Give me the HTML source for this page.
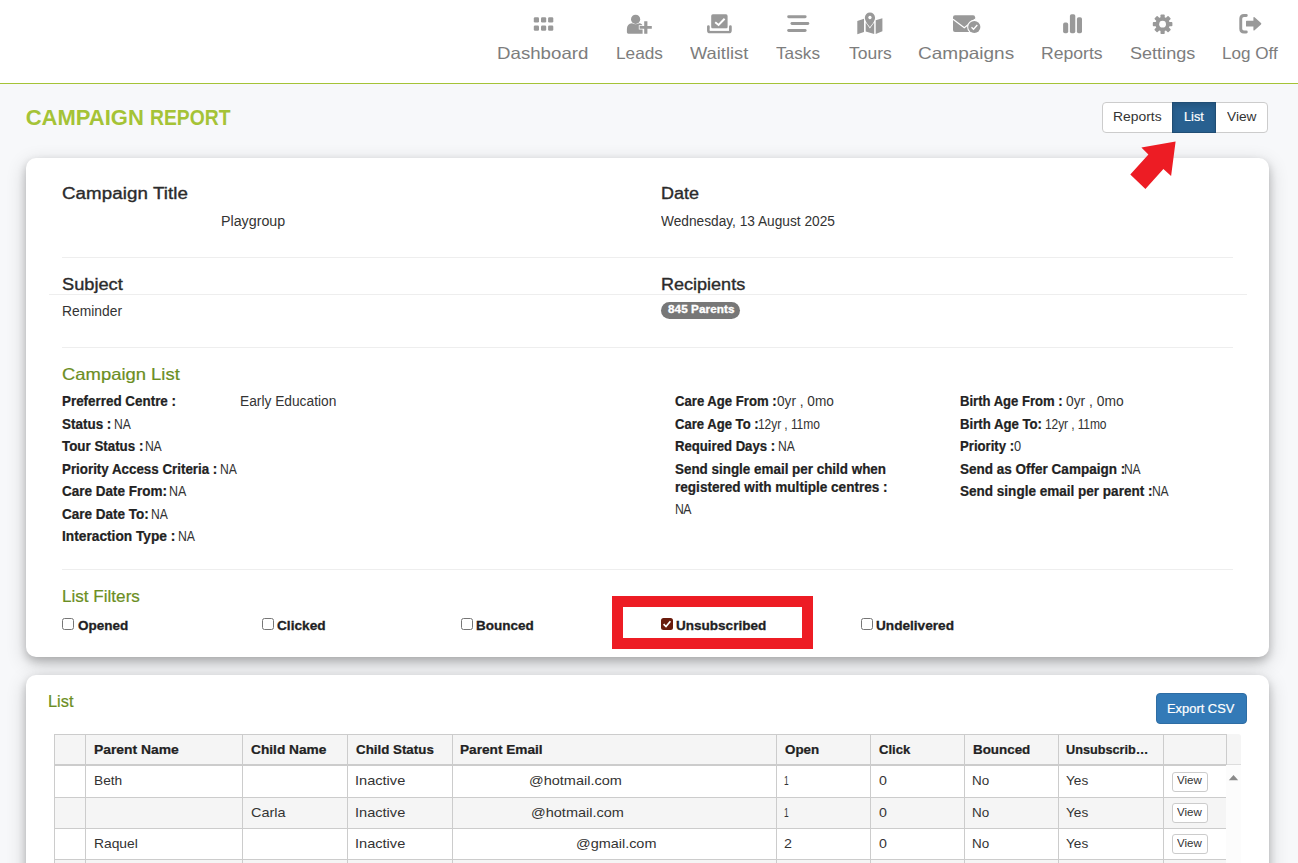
<!DOCTYPE html>
<html><head><meta charset="utf-8"><title>Campaign Report</title>
<style>
*{box-sizing:border-box}
html,body{margin:0;padding:0}
body{width:1298px;height:863px;overflow:hidden;background:#f7f8fa;font-family:"Liberation Sans",sans-serif;position:relative}
.t{position:absolute;white-space:pre;line-height:1;transform-origin:0 50%;font-family:"Liberation Sans",sans-serif}
.a{position:absolute}
#hdr{left:0;top:0;width:1298px;height:84px;background:#fff;border-bottom:1px solid #a5c336}
.card{background:#fff;border-radius:10px;box-shadow:0 4px 8px 0 rgba(0,0,0,.2),0 6px 20px 0 rgba(0,0,0,.19)}
.hr{height:1px;background:#eee}
.cb{width:11.5px;height:11.5px;border:1px solid #767676;border-radius:2.5px;background:#fff}
.vb{border:1px solid #ccc;border-radius:3px;background:#fff}
.vl{width:1px;background:#ccc}
.hl{height:1px;background:#ccc}
</style></head><body>
<div id="hdr" class="a"></div>
<svg class="a" style="left:0;top:0" width="1298" height="83" viewBox="0 0 1298 83">
<g fill="#999">
<!-- dashboard grid -->
<rect x="533.8" y="17.2" width="5.2" height="5.2" rx="1.2"/><rect x="541" y="17.2" width="5.2" height="5.2" rx="1.2"/><rect x="548.1" y="17.2" width="5.2" height="5.2" rx="1.2"/>
<rect x="533.8" y="25.5" width="5.2" height="5.2" rx="1.2"/><rect x="541" y="25.5" width="5.2" height="5.2" rx="1.2"/><rect x="548.1" y="25.5" width="5.2" height="5.2" rx="1.2"/>
<!-- leads user-plus -->
<circle cx="635.6" cy="19.3" r="4.6"/>
<path d="M626.9 32.3 L626.9 29 Q626.9 23.6 632 23.2 Q635.6 25.4 639.2 23.2 Q642.6 23.6 642.6 26 L642.6 33.7 L628.3 33.7 Q626.9 33.7 626.9 32.3 Z"/>
<path d="M644.2 21.2 h3.2 v4.9 h4.4 v2.7 h-4.4 v4.9 h-3.2 v-4.9 h-4.6 v-2.7 h4.6 z" stroke="#fff" stroke-width="1.6" paint-order="stroke"/>
<!-- waitlist -->
<rect x="711.2" y="14.3" width="16.4" height="14.2" rx="1.6"/>
<path d="M708.4 26.5 V30.4 Q708.4 32 710 32 H728.8 Q730.4 32 730.4 30.4 V26.5" fill="none" stroke="#999" stroke-width="2.7" stroke-linecap="round"/>
<rect x="709.8" y="28.6" width="19.2" height="2.05" fill="#fff"/>
<path d="M715.2 22.2 L718.6 25 L724.6 18.8" fill="none" stroke="#fff" stroke-width="2"/>
<!-- tasks -->
<rect x="787.2" y="15.3" width="19.4" height="2.9" rx="1.45"/><rect x="790.5" y="22" width="18.8" height="2.9" rx="1.45"/><rect x="787.2" y="29" width="19.4" height="2.9" rx="1.45"/>
<!-- tours map -->
<path d="M857.3 21 L864 18.8 L864 32 L857.3 34.2 Z"/>
<path d="M865.7 22.5 L869.9 28.6 L874.2 22.5 L874.2 34.1 L865.7 31.6 Z"/>
<path d="M875.7 20.2 L882.4 18.2 L882.4 31.3 L875.7 34.1 Z"/>
<path d="M869.95 12.6 A5.1 5.1 0 0 1 875.05 17.7 C875.05 21 871.5 25 869.95 27.2 C868.4 25 864.85 21 864.85 17.7 A5.1 5.1 0 0 1 869.95 12.6 Z M869.95 15.8 A1.7 1.7 0 1 0 869.96 15.8 Z" fill-rule="evenodd"/>
<!-- campaigns envelope -->
<rect x="953" y="15.3" width="22.1" height="16.6" rx="2"/>
<path d="M953 19.3 L964.3 27.8 L975.1 19.3" fill="none" stroke="#fff" stroke-width="1.2"/>
<circle cx="974.3" cy="27" r="7.2" fill="#fff"/>
<circle cx="974.3" cy="27" r="6.1"/>
<path d="M971.5 27.2 L973.5 29.2 L977.3 25" fill="none" stroke="#fff" stroke-width="1.3"/>
<!-- reports bars -->
<rect x="1063.1" y="22.6" width="5.1" height="10.7" rx="1.8"/><rect x="1069.9" y="14.3" width="5.4" height="19" rx="1.8"/><rect x="1076.9" y="17.2" width="5.1" height="16.1" rx="1.8"/>
<!-- settings gear -->
<g transform="translate(1162.6 24.2)">
<circle r="7.1"/>
<g id="tooth"><rect x="-2.1" y="-9.8" width="4.2" height="19.6" rx="0.8"/></g>
<rect x="-2.1" y="-9.8" width="4.2" height="19.6" rx="0.8" transform="rotate(45)"/>
<rect x="-2.1" y="-9.8" width="4.2" height="19.6" rx="0.8" transform="rotate(90)"/>
<rect x="-2.1" y="-9.8" width="4.2" height="19.6" rx="0.8" transform="rotate(135)"/>
<circle r="3.4" fill="#fff"/>
</g>
<!-- log off -->
<path d="M1246.3 15.45 H1244 Q1240.75 15.45 1240.75 18.7 V28.8 Q1240.75 32.05 1244 32.05 H1246.3" fill="none" stroke="#999" stroke-width="2.9" stroke-linecap="round"/>
<path d="M1246.6 20.8 H1253.4 V17.6 Q1253.6 16.6 1254.6 17.3 L1261 23 Q1261.7 23.7 1261 24.4 L1254.6 30.2 Q1253.6 30.9 1253.4 29.9 V26.6 H1246.6 Q1246 26.6 1246 26 V21.4 Q1246 20.8 1246.6 20.8 Z"/>
</g>
</svg>

<!-- button group -->
<div class="a" style="left:1102px;top:102px;width:166px;height:31px;border:1px solid #ccc;border-radius:4px;background:#fff"></div>
<div class="a" style="left:1172px;top:102px;width:44px;height:31px;background:#286090;border:1px solid #204d74;box-shadow:inset 0 3px 5px rgba(0,0,0,.125)"></div>
<!-- card 1 -->
<div class="a card" style="left:26px;top:158px;width:1243px;height:499px"></div>
<div class="a hr" style="left:62px;top:257px;width:1171px"></div>
<div class="a hr" style="left:49px;top:294px;width:1198px"></div>
<div class="a hr" style="left:62px;top:347px;width:1171px"></div>
<div class="a hr" style="left:62px;top:569px;width:1171px"></div>
<div class="a" style="left:661px;top:302px;width:79px;height:17px;border-radius:8.5px;background:#777"></div>
<!-- checkboxes -->
<div class="a cb" style="left:62px;top:618px"></div>
<div class="a cb" style="left:262px;top:618px"></div>
<div class="a cb" style="left:461px;top:618px"></div>
<div class="a cb" style="left:861px;top:618px"></div>
<div class="a" style="left:661px;top:618px;width:11.5px;height:11.5px;border-radius:2.5px;background:#6a1b0c"></div>
<svg class="a" style="left:661px;top:618px" width="12" height="12" viewBox="0 0 12 12"><path d="M2.6 6.2 L5 8.6 L9.4 3.2" fill="none" stroke="#fff" stroke-width="1.7"/></svg>
<div class="a" style="left:612px;top:596px;width:201px;height:53px;border:11px solid #ed1c24"></div>
<!-- arrow -->
<svg class="a" style="left:1120px;top:135px" width="70" height="60" viewBox="1120 135 70 60"><polygon points="1175.6,141.4 1141.4,147.4 1148.4,154.6 1130.3,174.5 1145.4,188.9 1163.4,169.1 1171.1,176" fill="#ed1c24"/></svg>
<!-- card 2 -->
<div class="a card" style="left:26px;top:675px;width:1243px;height:260px"></div>
<div class="a" style="left:1156px;top:693px;width:91px;height:31px;background:#337ab7;border:1px solid #2e6da4;border-radius:4px"></div>
<!-- table -->
<div class="a" style="left:54px;top:734px;width:1187px;height:31px;background:#f5f5f5;border-top-right-radius:3px"></div>
<div class="a" style="left:1226px;top:764px;width:15px;height:1px;background:#ddd"></div>
<div class="a" style="left:54px;top:798px;width:1172px;height:30px;background:#f5f5f5"></div>
<div class="a" style="left:54px;top:860px;width:1172px;height:3px;background:#f5f5f5"></div>
<div class="a" style="left:1226px;top:765px;width:15px;height:98px;background:#fcfcfc"></div>
<div class="a hl" style="left:54px;top:734px;width:1172px"></div>
<div class="a" style="left:54px;top:764px;width:1172px;height:2px;background:#ccc"></div>
<div class="a hl" style="left:54px;top:797px;width:1172px"></div>
<div class="a hl" style="left:54px;top:828px;width:1172px"></div>
<div class="a hl" style="left:54px;top:859px;width:1172px"></div>
<div class="a vl" style="left:54px;top:734px;height:129px"></div>
<div class="a vl" style="left:85px;top:734px;height:129px"></div>
<div class="a vl" style="left:242px;top:734px;height:129px"></div>
<div class="a vl" style="left:347px;top:734px;height:129px"></div>
<div class="a vl" style="left:452px;top:734px;height:129px"></div>
<div class="a vl" style="left:776px;top:734px;height:129px"></div>
<div class="a vl" style="left:870px;top:734px;height:129px"></div>
<div class="a vl" style="left:964px;top:734px;height:129px"></div>
<div class="a vl" style="left:1058px;top:734px;height:129px"></div>
<div class="a vl" style="left:1163px;top:734px;height:129px"></div>
<div class="a vl" style="left:1226px;top:734px;height:31px"></div>
<div class="a vb" style="left:1172px;top:772px;width:36px;height:20px"></div>
<div class="a vb" style="left:1172px;top:803px;width:36px;height:20px"></div>
<div class="a vb" style="left:1172px;top:834px;width:36px;height:20px"></div>
<svg class="a" style="left:1228px;top:774px" width="12" height="8" viewBox="1228 774 12 8"><polygon points="1233.5,774.9 1238.2,780.2 1228.8,780.2" fill="#8a8a8a"/></svg>
<span class="t" style="left:496.96px;top:45.00px;font-size:16.5px;font-weight:400;color:#7d7d7d;transform:scaleX(1.1322);">Dashboard</span>
<span class="t" style="left:615.60px;top:45.00px;font-size:16.5px;font-weight:400;color:#7d7d7d;transform:scaleX(1.0454);">Leads</span>
<span class="t" style="left:690.21px;top:45.00px;font-size:16.5px;font-weight:400;color:#7d7d7d;transform:scaleX(1.1093);">Waitlist</span>
<span class="t" style="left:776.42px;top:45.00px;font-size:16.5px;font-weight:400;color:#7d7d7d;transform:scaleX(1.0440);">Tasks</span>
<span class="t" style="left:849.00px;top:45.00px;font-size:16.5px;font-weight:400;color:#7d7d7d;transform:scaleX(1.0606);">Tours</span>
<span class="t" style="left:918.04px;top:45.00px;font-size:16.5px;font-weight:400;color:#7d7d7d;transform:scaleX(1.1524);">Campaigns</span>
<span class="t" style="left:1041.00px;top:45.00px;font-size:16.5px;font-weight:400;color:#7d7d7d;transform:scaleX(1.0670);">Reports</span>
<span class="t" style="left:1129.57px;top:45.00px;font-size:16.5px;font-weight:400;color:#7d7d7d;transform:scaleX(1.0945);">Settings</span>
<span class="t" style="left:1221.54px;top:45.00px;font-size:16.5px;font-weight:400;color:#7d7d7d;transform:scaleX(1.0371);">Log Off</span>
<span class="t" style="left:25.65px;top:107.00px;font-size:22px;font-weight:700;color:#a5c336;">CAMPAIGN</span>
<span class="t" style="left:149.84px;top:107.00px;font-size:22px;font-weight:700;color:#a5c336;transform:scaleX(0.8784);">REPORT</span>
<span class="t" style="left:1113.00px;top:110.00px;font-size:13px;font-weight:400;color:#333;transform:scaleX(1.0680);">Reports</span>
<span class="t" style="left:1183.72px;top:110.00px;font-size:13px;font-weight:400;color:#fff;transform:scaleX(0.9776);-webkit-text-stroke:0.2px #fff;">List</span>
<span class="t" style="left:1226.69px;top:110.00px;font-size:13px;font-weight:400;color:#333;transform:scaleX(1.0527);">View</span>
<span class="t" style="left:62.00px;top:186.00px;font-size:16px;font-weight:400;color:#2b2b2b;letter-spacing:0.071px;transform:scaleX(1.1700);-webkit-text-stroke:0.35px #2b2b2b;">Campaign Title</span>
<span class="t" style="left:660.50px;top:186.00px;font-size:16px;font-weight:400;color:#2b2b2b;transform:scaleX(1.1232);-webkit-text-stroke:0.35px #2b2b2b;">Date</span>
<span class="t" style="left:62.00px;top:277.00px;font-size:16px;font-weight:400;color:#2b2b2b;transform:scaleX(1.1391);-webkit-text-stroke:0.35px #2b2b2b;">Subject</span>
<span class="t" style="left:660.50px;top:277.00px;font-size:16px;font-weight:400;color:#2b2b2b;transform:scaleX(1.1267);-webkit-text-stroke:0.35px #2b2b2b;">Recipients</span>
<span class="t" style="left:221.43px;top:214.00px;font-size:14px;font-weight:400;color:#333;transform:scaleX(1.0178);">Playgroup</span>
<span class="t" style="left:661.00px;top:214.00px;font-size:14px;font-weight:400;color:#333;transform:scaleX(0.9786);">Wednesday, 13 August 2025</span>
<span class="t" style="left:62.00px;top:304.00px;font-size:14px;font-weight:400;color:#333;transform:scaleX(0.9886);">Reminder</span>
<span class="t" style="left:62.00px;top:366.00px;font-size:16.5px;font-weight:400;color:#6b8e23;transform:scaleX(1.1164);-webkit-text-stroke:0.2px #6b8e23;">Campaign List</span>
<span class="t" style="left:62.00px;top:588.00px;font-size:16.5px;font-weight:400;color:#6b8e23;transform:scaleX(1.0357);-webkit-text-stroke:0.2px #6b8e23;">List Filters</span>
<span class="t" style="left:48.00px;top:693.00px;font-size:16.5px;font-weight:400;color:#6b8e23;transform:scaleX(0.9922);-webkit-text-stroke:0.2px #6b8e23;">List</span>
<span class="t" style="left:62.00px;top:394.00px;font-size:14px;font-weight:700;color:#222;transform:scaleX(0.9578);-webkit-text-stroke:0.22px #222;">Preferred Centre :</span>
<span class="t" style="left:62.00px;top:417.00px;font-size:14px;font-weight:700;color:#222;transform:scaleX(0.9608);-webkit-text-stroke:0.22px #222;">Status :</span>
<span class="t" style="left:114.00px;top:417.00px;font-size:14px;font-weight:400;color:#333;letter-spacing:-0.166px;transform:scaleX(0.8682);">NA</span>
<span class="t" style="left:62.00px;top:439.00px;font-size:14px;font-weight:700;color:#222;transform:scaleX(0.9535);-webkit-text-stroke:0.22px #222;">Tour Status :</span>
<span class="t" style="left:145.05px;top:439.00px;font-size:14px;font-weight:400;color:#333;letter-spacing:-0.415px;transform:scaleX(0.8738);">NA</span>
<span class="t" style="left:62.00px;top:462.00px;font-size:14px;font-weight:700;color:#222;transform:scaleX(0.9535);-webkit-text-stroke:0.22px #222;">Priority Access Criteria :</span>
<span class="t" style="left:220.00px;top:462.00px;font-size:14px;font-weight:400;color:#333;letter-spacing:-0.166px;transform:scaleX(0.8682);">NA</span>
<span class="t" style="left:62.00px;top:484.00px;font-size:14px;font-weight:700;color:#222;transform:scaleX(0.9651);-webkit-text-stroke:0.22px #222;">Care Date From:</span>
<span class="t" style="left:169.46px;top:484.00px;font-size:14px;font-weight:400;color:#333;transform:scaleX(0.8920);">NA</span>
<span class="t" style="left:62.00px;top:507.00px;font-size:14px;font-weight:700;color:#222;transform:scaleX(0.9643);-webkit-text-stroke:0.22px #222;">Care Date To:</span>
<span class="t" style="left:151.00px;top:507.00px;font-size:14px;font-weight:400;color:#333;letter-spacing:-0.095px;transform:scaleX(0.8646);">NA</span>
<span class="t" style="left:62.00px;top:529.00px;font-size:14px;font-weight:700;color:#222;transform:scaleX(0.9804);-webkit-text-stroke:0.22px #222;">Interaction Type :</span>
<span class="t" style="left:177.50px;top:529.00px;font-size:14px;font-weight:400;color:#333;transform:scaleX(0.8772);">NA</span>
<span class="t" style="left:239.95px;top:394.00px;font-size:14px;font-weight:400;color:#333;transform:scaleX(0.9823);">Early Education</span>
<span class="t" style="left:674.50px;top:394.00px;font-size:14px;font-weight:700;color:#222;transform:scaleX(0.9373);-webkit-text-stroke:0.22px #222;">Care Age From :</span>
<span class="t" style="left:777.00px;top:394.00px;font-size:14px;font-weight:400;color:#333;transform:scaleX(0.9750);">0yr , 0mo</span>
<span class="t" style="left:674.50px;top:417.00px;font-size:14px;font-weight:700;color:#222;transform:scaleX(0.9349);-webkit-text-stroke:0.22px #222;">Care Age To :</span>
<span class="t" style="left:757.76px;top:417.00px;font-size:14px;font-weight:400;color:#333;letter-spacing:-0.101px;transform:scaleX(0.8607);">12yr , 11mo</span>
<span class="t" style="left:674.50px;top:439.00px;font-size:14px;font-weight:700;color:#222;transform:scaleX(0.9390);-webkit-text-stroke:0.22px #222;">Required Days :</span>
<span class="t" style="left:778.00px;top:439.00px;font-size:14px;font-weight:400;color:#333;transform:scaleX(0.8647);">NA</span>
<span class="t" style="left:674.50px;top:462.00px;font-size:14px;font-weight:700;color:#222;transform:scaleX(0.9585);-webkit-text-stroke:0.22px #222;">Send single email per child when</span>
<span class="t" style="left:674.50px;top:480.00px;font-size:14px;font-weight:700;color:#222;transform:scaleX(0.9690);-webkit-text-stroke:0.22px #222;">registered with multiple centres :</span>
<span class="t" style="left:674.50px;top:502.00px;font-size:14px;font-weight:400;color:#333;letter-spacing:-0.838px;transform:scaleX(0.8770);">NA</span>
<span class="t" style="left:960.00px;top:394.00px;font-size:14px;font-weight:700;color:#222;transform:scaleX(0.9343);-webkit-text-stroke:0.22px #222;">Birth Age From :</span>
<span class="t" style="left:1065.91px;top:394.00px;font-size:14px;font-weight:400;color:#333;transform:scaleX(0.9884);">0yr , 0mo</span>
<span class="t" style="left:960.00px;top:417.00px;font-size:14px;font-weight:700;color:#222;transform:scaleX(0.9412);-webkit-text-stroke:0.22px #222;">Birth Age To:</span>
<span class="t" style="left:1044.72px;top:417.00px;font-size:14px;font-weight:400;color:#333;letter-spacing:-0.130px;transform:scaleX(0.8600);">12yr , 11mo</span>
<span class="t" style="left:960.00px;top:439.00px;font-size:14px;font-weight:700;color:#222;transform:scaleX(0.9398);-webkit-text-stroke:0.22px #222;">Priority :</span>
<span class="t" style="left:1014.40px;top:439.00px;font-size:14px;font-weight:400;color:#333;transform:scaleX(0.9136);">0</span>
<span class="t" style="left:960.00px;top:462.00px;font-size:14px;font-weight:700;color:#222;transform:scaleX(0.9651);-webkit-text-stroke:0.22px #222;">Send as Offer Campaign :</span>
<span class="t" style="left:1124.00px;top:462.00px;font-size:14px;font-weight:400;color:#333;letter-spacing:-0.151px;transform:scaleX(0.8646);">NA</span>
<span class="t" style="left:960.00px;top:484.00px;font-size:14px;font-weight:700;color:#222;transform:scaleX(0.9663);-webkit-text-stroke:0.22px #222;">Send single email per parent :</span>
<span class="t" style="left:1151.51px;top:484.00px;font-size:14px;font-weight:400;color:#333;letter-spacing:-0.188px;transform:scaleX(0.8682);">NA</span>
<span class="t" style="left:77.61px;top:619.00px;font-size:13px;font-weight:700;color:#1f1f24;transform:scaleX(1.0386);-webkit-text-stroke:0.3px #1f1f24;">Opened</span>
<span class="t" style="left:277.00px;top:619.00px;font-size:13px;font-weight:700;color:#1f1f24;transform:scaleX(1.0513);-webkit-text-stroke:0.3px #1f1f24;">Clicked</span>
<span class="t" style="left:475.93px;top:619.00px;font-size:13px;font-weight:700;color:#1f1f24;transform:scaleX(1.0392);-webkit-text-stroke:0.3px #1f1f24;">Bounced</span>
<span class="t" style="left:676.41px;top:619.00px;font-size:13px;font-weight:700;color:#1f1f24;transform:scaleX(1.0406);-webkit-text-stroke:0.3px #1f1f24;">Unsubscribed</span>
<span class="t" style="left:876.39px;top:619.00px;font-size:13px;font-weight:700;color:#1f1f24;transform:scaleX(1.0477);-webkit-text-stroke:0.3px #1f1f24;">Undelivered</span>
<span class="t" style="left:668.00px;top:305.00px;font-size:10px;font-weight:700;color:#fff;letter-spacing:0.068px;transform:scaleX(1.1694);-webkit-text-stroke:0.3px #fff;">845 Parents</span>
<span class="t" style="left:1167.32px;top:703.00px;font-size:12.5px;font-weight:400;color:#fff;transform:scaleX(1.0315);-webkit-text-stroke:0.2px #fff;">Export CSV</span>
<span class="t" style="left:93.82px;top:743.00px;font-size:13px;font-weight:700;color:#222;transform:scaleX(1.0673);-webkit-text-stroke:0.22px #222;">Parent Name</span>
<span class="t" style="left:251.00px;top:743.00px;font-size:13px;font-weight:700;color:#222;transform:scaleX(1.0541);-webkit-text-stroke:0.22px #222;">Child Name</span>
<span class="t" style="left:355.61px;top:743.00px;font-size:13px;font-weight:700;color:#222;transform:scaleX(1.0258);-webkit-text-stroke:0.22px #222;">Child Status</span>
<span class="t" style="left:459.76px;top:743.00px;font-size:13px;font-weight:700;color:#222;transform:scaleX(1.0494);-webkit-text-stroke:0.22px #222;">Parent Email</span>
<span class="t" style="left:784.64px;top:743.00px;font-size:13px;font-weight:700;color:#222;transform:scaleX(1.0278);-webkit-text-stroke:0.22px #222;">Open</span>
<span class="t" style="left:878.69px;top:743.00px;font-size:13px;font-weight:700;color:#222;transform:scaleX(1.0078);-webkit-text-stroke:0.22px #222;">Click</span>
<span class="t" style="left:973.00px;top:743.00px;font-size:13px;font-weight:700;color:#222;transform:scaleX(1.0303);-webkit-text-stroke:0.22px #222;">Bounced</span>
<span class="t" style="left:1066.00px;top:743.00px;font-size:13px;font-weight:700;color:#222;transform:scaleX(0.9739);-webkit-text-stroke:0.22px #222;">Unsubscrib…</span>
<span class="t" style="left:93.60px;top:774.00px;font-size:13px;font-weight:400;color:#333;transform:scaleX(1.0561);">Beth</span>
<span class="t" style="left:251.00px;top:806.00px;font-size:13px;font-weight:400;color:#333;transform:scaleX(1.1125);">Carla</span>
<span class="t" style="left:93.60px;top:837.00px;font-size:13px;font-weight:400;color:#333;transform:scaleX(1.0634);">Raquel</span>
<span class="t" style="left:355.31px;top:774.00px;font-size:13px;font-weight:400;color:#333;transform:scaleX(1.1219);">Inactive</span>
<span class="t" style="left:879.00px;top:774.00px;font-size:13px;font-weight:400;color:#333;transform:scaleX(1.0925);">0</span>
<span class="t" style="left:972.00px;top:774.00px;font-size:13px;font-weight:400;color:#333;transform:scaleX(1.0346);">No</span>
<span class="t" style="left:1066.00px;top:774.00px;font-size:13px;font-weight:400;color:#333;transform:scaleX(1.0496);">Yes</span>
<span class="t" style="left:355.31px;top:806.00px;font-size:13px;font-weight:400;color:#333;transform:scaleX(1.1219);">Inactive</span>
<span class="t" style="left:879.00px;top:806.00px;font-size:13px;font-weight:400;color:#333;transform:scaleX(1.0925);">0</span>
<span class="t" style="left:972.00px;top:806.00px;font-size:13px;font-weight:400;color:#333;transform:scaleX(1.0346);">No</span>
<span class="t" style="left:1066.00px;top:806.00px;font-size:13px;font-weight:400;color:#333;transform:scaleX(1.0496);">Yes</span>
<span class="t" style="left:355.31px;top:837.00px;font-size:13px;font-weight:400;color:#333;transform:scaleX(1.1219);">Inactive</span>
<span class="t" style="left:879.00px;top:837.00px;font-size:13px;font-weight:400;color:#333;transform:scaleX(1.0925);">0</span>
<span class="t" style="left:972.00px;top:837.00px;font-size:13px;font-weight:400;color:#333;transform:scaleX(1.0346);">No</span>
<span class="t" style="left:1066.00px;top:837.00px;font-size:13px;font-weight:400;color:#333;transform:scaleX(1.0496);">Yes</span>
<span class="t" style="left:529.00px;top:774.00px;font-size:13px;font-weight:400;color:#333;transform:scaleX(1.1144);">@hotmail.com</span>
<span class="t" style="left:530.50px;top:806.00px;font-size:13px;font-weight:400;color:#333;transform:scaleX(1.1157);">@hotmail.com</span>
<span class="t" style="left:576.40px;top:837.00px;font-size:13px;font-weight:400;color:#333;transform:scaleX(1.1101);">@gmail.com</span>
<span class="t" style="left:783.95px;top:774.00px;font-size:13px;font-weight:400;color:#333;transform:scaleX(0.6448);">1</span>
<span class="t" style="left:783.95px;top:806.00px;font-size:13px;font-weight:400;color:#333;transform:scaleX(0.6448);">1</span>
<span class="t" style="left:783.89px;top:837.00px;font-size:13px;font-weight:400;color:#333;transform:scaleX(1.0958);">2</span>
<span class="t" style="left:1177.25px;top:775.00px;font-size:11px;font-weight:400;color:#333;transform:scaleX(1.0483);">View</span>
<span class="t" style="left:1177.25px;top:807.00px;font-size:11px;font-weight:400;color:#333;transform:scaleX(1.0483);">View</span>
<span class="t" style="left:1177.25px;top:838.00px;font-size:11px;font-weight:400;color:#333;transform:scaleX(1.0483);">View</span>
</body></html>
